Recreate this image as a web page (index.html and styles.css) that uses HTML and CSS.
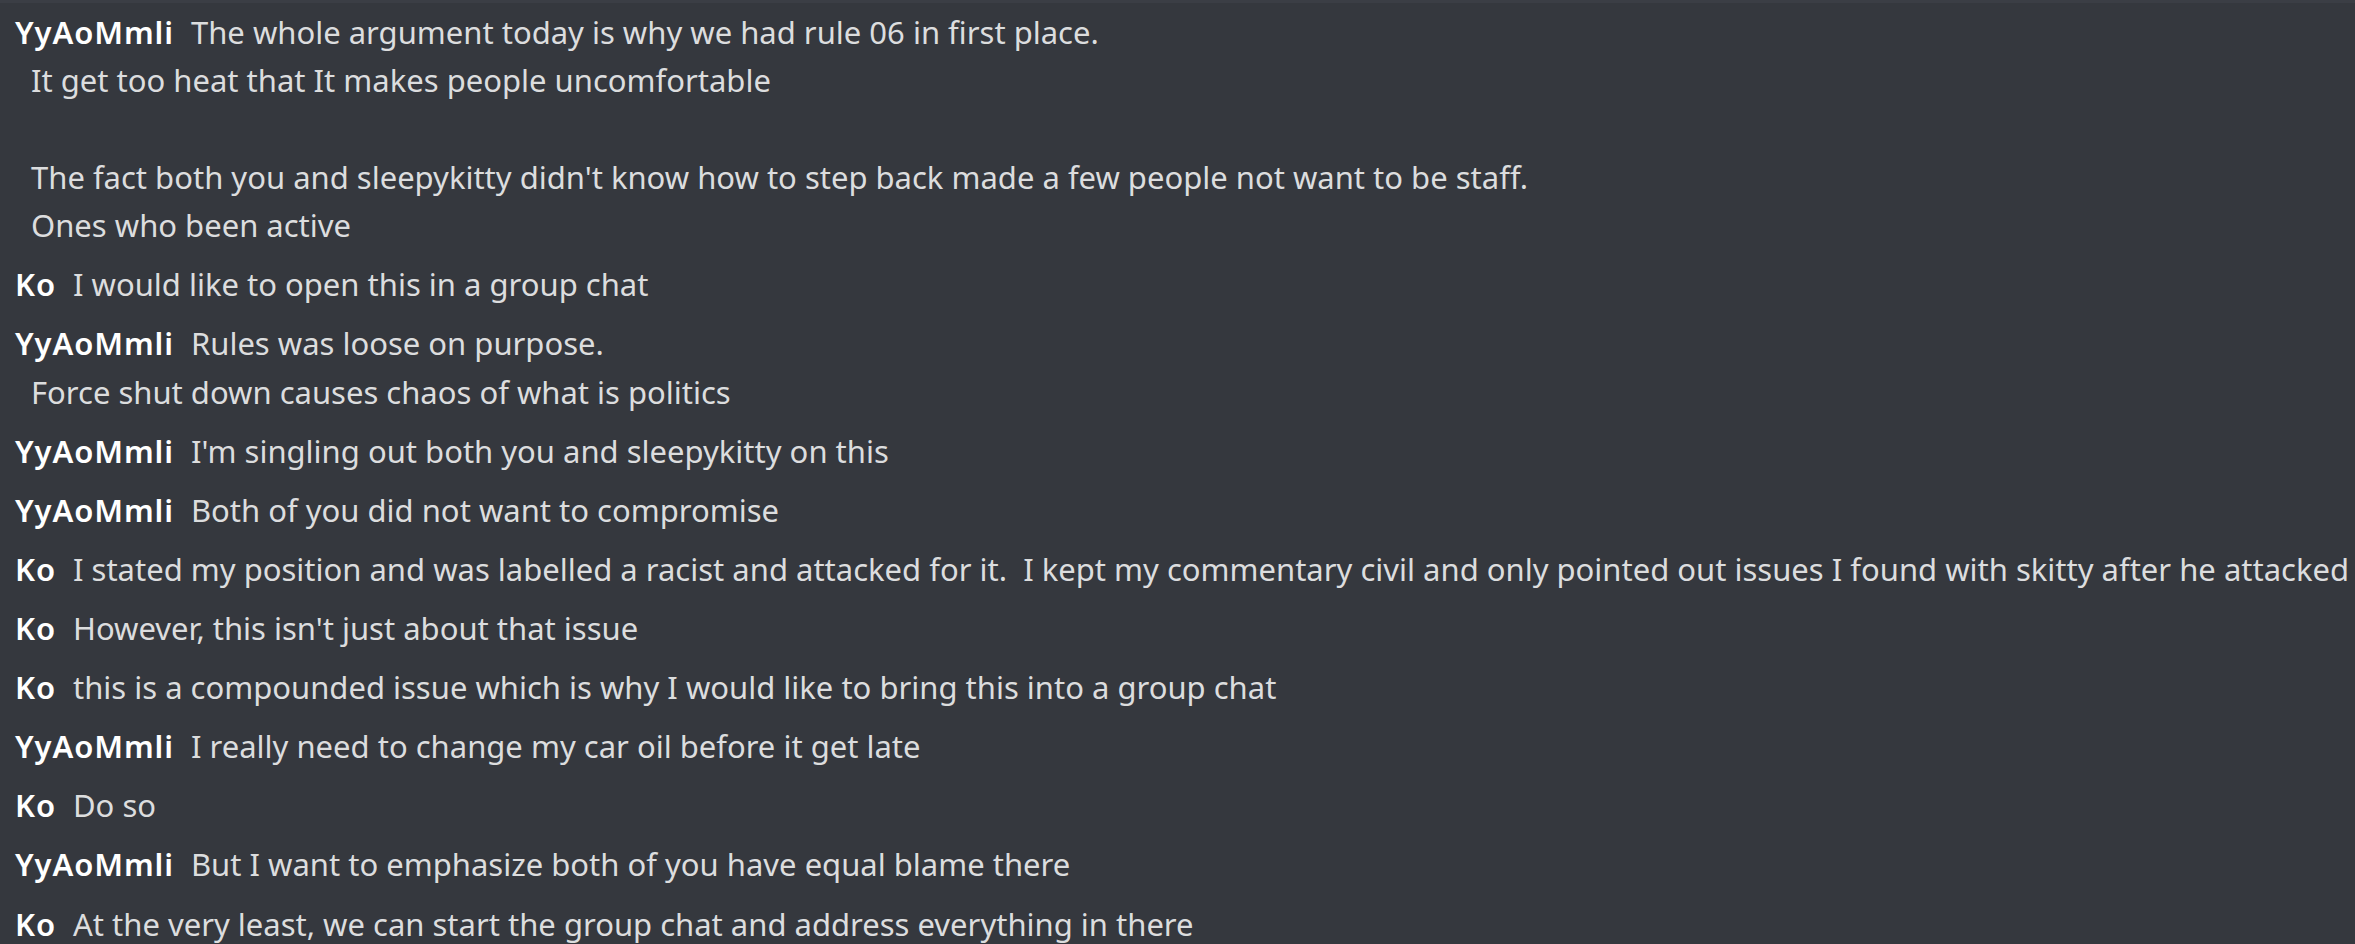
FILE: index.html
```html
<!DOCTYPE html>
<html>
<head>
<meta charset="utf-8">
<link rel="stylesheet" href="styles.css">
</head>
<body>
<div class="chat">
  <div class="msg"><span class="name">YyAoMmli</span><span class="text">The whole argument today is why we had rule 06 in first place.</span>
    <div class="cont">It get too heat that It makes people uncomfortable</div>
    <div class="cont blank">&nbsp;</div>
    <div class="cont">The fact both you and sleepykitty didn't know how to step back made a few people not want to be staff.</div>
    <div class="cont">Ones who been active</div>
  </div>
  <div class="msg"><span class="name">Ko</span><span class="text">I would like to open this in a group chat</span></div>
  <div class="msg"><span class="name">YyAoMmli</span><span class="text">Rules was loose on purpose.</span>
    <div class="cont">Force shut down causes chaos of what is politics</div>
  </div>
  <div class="msg"><span class="name">YyAoMmli</span><span class="text">I'm singling out both you and sleepykitty on this</span></div>
  <div class="msg"><span class="name">YyAoMmli</span><span class="text">Both of you did not want to compromise</span></div>
  <div class="msg"><span class="name">Ko</span><span class="text">I stated my position and was labelled a racist and attacked for it.  I kept my commentary civil and only pointed out issues I found with skitty after he attacked</span></div>
  <div class="msg"><span class="name">Ko</span><span class="text">However, this isn't just about that issue</span></div>
  <div class="msg"><span class="name">Ko</span><span class="text">this is a compounded issue which is why I would like to bring this into a group chat</span></div>
  <div class="msg"><span class="name">YyAoMmli</span><span class="text">I really need to change my car oil before it get late</span></div>
  <div class="msg"><span class="name">Ko</span><span class="text">Do so</span></div>
  <div class="msg"><span class="name">YyAoMmli</span><span class="text">But I want to emphasize both of you have equal blame there</span></div>
  <div class="msg"><span class="name">Ko</span><span class="text">At the very least, we can start the group chat and address everything in there</span></div>
</div>
</body>
</html>
```
FILE: styles.css
```css
html, body {
  margin: 0;
  padding: 0;
  background: #35383e;
  height: 100%;
  overflow: hidden;
}
body {
  border-top: 3px solid #3b3e45;
  box-sizing: border-box;
}
.chat {
  padding: 4.5px 0 0 15px;
  font-family: "Noto Sans", sans-serif;
  font-size: 31px;
  line-height: 48.4px;
  color: #dcddde;
  white-space: nowrap;
}
.msg {
  margin-bottom: 10.7px;
}
.name {
  color: #ffffff;
  font-weight: 600;
  letter-spacing: 0.9px;
  margin-right: 17px;
}
.text {
  white-space: pre;
}
.cont {
  padding-left: 16px;
}
```
